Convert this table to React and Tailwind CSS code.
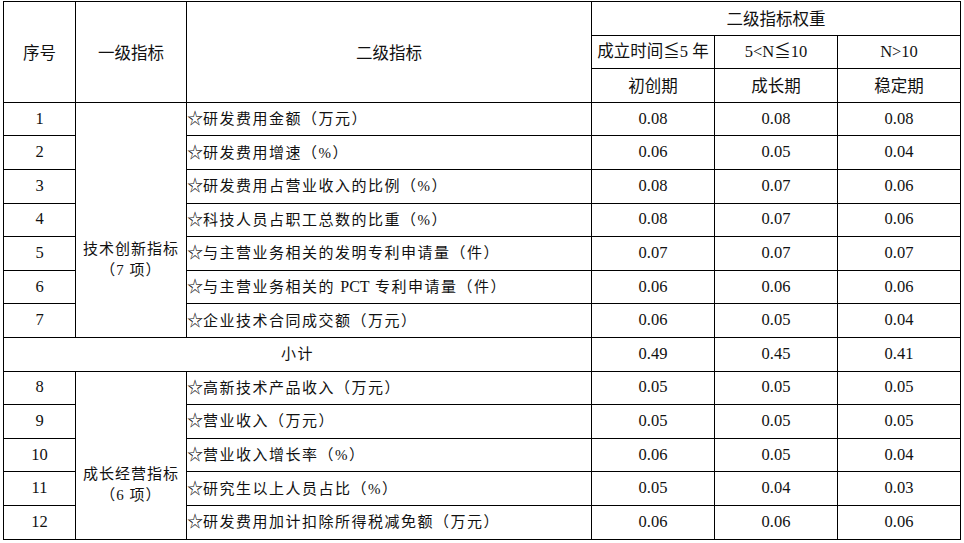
import React from "react";

const groups = [
  {
    title: "技术创新指标",
    count: "（7 项）",
    pad: "pt-[80px]",
    rows: [
      ["1", "研发费用金额（万元）", "0.08", "0.08", "0.08"],
      ["2", "研发费用增速（%）", "0.06", "0.05", "0.04"],
      ["3", "研发费用占营业收入的比例（%）", "0.08", "0.07", "0.06"],
      ["4", "科技人员占职工总数的比重（%）", "0.08", "0.07", "0.06"],
      ["5", "与主营业务相关的发明专利申请量（件）", "0.07", "0.07", "0.07"],
      ["6", "与主营业务相关的 PCT 专利申请量（件）", "0.06", "0.06", "0.06"],
      ["7", "企业技术合同成交额（万元）", "0.06", "0.05", "0.04"],
    ],
    subtotal: ["0.49", "0.45", "0.41"],
  },
  {
    title: "成长经营指标",
    count: "（6 项）",
    pad: "pt-[60px]",
    rows: [
      ["8", "高新技术产品收入（万元）", "0.05", "0.05", "0.05"],
      ["9", "营业收入（万元）", "0.05", "0.05", "0.05"],
      ["10", "营业收入增长率（%）", "0.06", "0.05", "0.04"],
      ["11", "研究生以上人员占比（%）", "0.05", "0.04", "0.03"],
      ["12", "研发费用加计扣除所得税减免额（万元）", "0.06", "0.06", "0.06"],
    ],
  },
];

const serif = "font-['Liberation_Serif','Noto_Sans_CJK_SC',serif]";
const sans = "font-['Noto_Sans_CJK_SC','Liberation_Sans',sans-serif]";
const cell = "border border-black p-0";

// keep "PCT" tight while the Chinese text keeps its wide spacing
function Label({ text }) {
  const parts = text.split(/(PCT)/);
  return (
    <>
      <span className="text-[16px] tracking-normal">☆</span>
      {parts.map((p, i) =>
        p === "PCT" ? (
          <span key={i} className="tracking-normal text-[16px]">PCT</span>
        ) : (
          <span key={i}>{p}</span>
        )
      )}
    </>
  );
}

export default function App() {
  return (
    <div className="w-[964px] h-[543px] bg-white overflow-hidden pt-[1px] pl-[3px]">
      <table className="table-fixed border-collapse w-[957px] text-[#111]">
        <colgroup>
          <col className="w-[72px]" />
          <col className="w-[111px]" />
          <col className="w-[405px]" />
          <col className="w-[123px]" />
          <col className="w-[123px]" />
          <col className="w-[123px]" />
        </colgroup>
        <thead>
          <tr className="h-[33.6px]">
            <th rowSpan={3} className={`${cell} ${sans} font-normal text-[16.5px] text-center`}>序号</th>
            <th rowSpan={3} className={`${cell} ${sans} font-normal text-[16.5px] text-center`}>一级指标</th>
            <th rowSpan={3} className={`${cell} ${sans} font-normal text-[16.5px] text-center`}>二级指标</th>
            <th colSpan={3} className={`${cell} ${sans} font-normal text-[16.5px] text-center`}>二级指标权重</th>
          </tr>
          <tr className="h-[33.6px]">
            <th className={`${cell} ${serif} font-normal text-[16.5px] text-center whitespace-nowrap`}>成立时间≦5 年</th>
            <th className={`${cell} ${serif} font-normal text-[16.5px] text-center`}>5&lt;N≦10</th>
            <th className={`${cell} ${serif} font-normal text-[16.5px] text-center`}>N&gt;10</th>
          </tr>
          <tr className="h-[33.6px]">
            <th className={`${cell} ${sans} font-normal text-[16.5px] text-center`}>初创期</th>
            <th className={`${cell} ${sans} font-normal text-[16.5px] text-center`}>成长期</th>
            <th className={`${cell} ${sans} font-normal text-[16.5px] text-center`}>稳定期</th>
          </tr>
        </thead>
        <tbody className={`${serif} text-[16.5px]`}>
          {groups.map((g) => (
            <React.Fragment key={g.title}>
              {g.rows.map((r, i) => (
                <tr key={r[0]} className="h-[33.6px]">
                  <td className={`${cell} text-center`}>{r[0]}</td>
                  {i === 0 && (
                    <td rowSpan={g.rows.length} className={`${cell} ${g.pad} text-center align-middle text-[15px] leading-[21px] tracking-[1px]`}>
                      <div>{g.title}</div>
                      <div>{g.count}</div>
                    </td>
                  )}
                  <td className={`${cell} text-left text-[15px] tracking-[1.5px] whitespace-nowrap`}>
                    <Label text={r[1]} />
                  </td>
                  <td className={`${cell} text-center`}>{r[2]}</td>
                  <td className={`${cell} text-center`}>{r[3]}</td>
                  <td className={`${cell} text-center`}>{r[4]}</td>
                </tr>
              ))}
              {g.subtotal && (
                <tr className="h-[33.6px]">
                  <td colSpan={3} className={`${cell} text-center text-[15px] tracking-[1.5px]`}>小计</td>
                  {g.subtotal.map((v, j) => (
                    <td key={j} className={`${cell} text-center`}>{v}</td>
                  ))}
                </tr>
              )}
            </React.Fragment>
          ))}
        </tbody>
      </table>
    </div>
  );
}
